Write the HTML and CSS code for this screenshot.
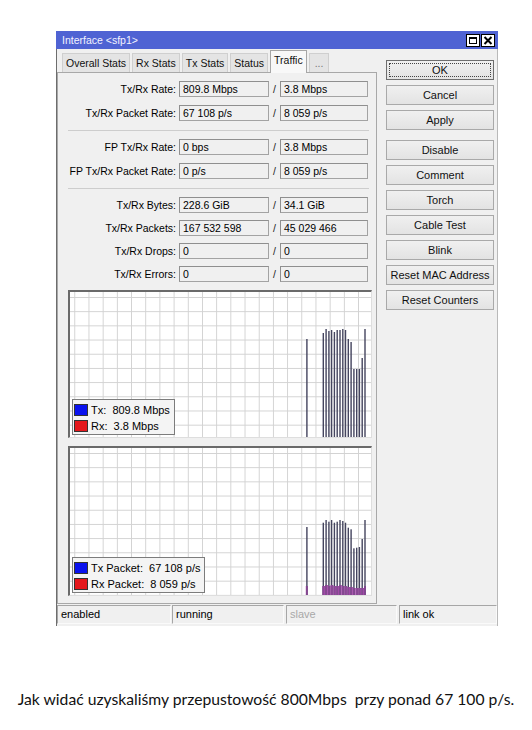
FILE: index.html
```html
<!DOCTYPE html>
<html lang="pl">
<head>
<meta charset="utf-8">
<title>Interface &lt;sfp1&gt;</title>
<link rel="stylesheet" href="styles.css">
</head>
<body>
<div class="win">
  <div class="titlebar">
    <span class="title">Interface &lt;sfp1&gt;</span>
    <svg class="tb-icons" width="29" height="13" viewBox="0 0 29 13">
      <rect x="0.5" y="0.5" width="13" height="12" fill="#fff" stroke="#000"/>
      <rect x="3.5" y="3.5" width="7" height="6" fill="none" stroke="#000"/>
      <line x1="3" y1="4" x2="11" y2="4" stroke="#000" stroke-width="2"/>
      <rect x="15.5" y="0.5" width="13" height="12" fill="#fff" stroke="#000"/>
      <path d="M18.5 3 L25.5 10 M25.5 3 L18.5 10" stroke="#000" stroke-width="2"/>
    </svg>
  </div>
  <div class="winbody">
    <div class="main">
      <div class="leftpane">
        <div class="tabs">
          <div class="tab">Overall Stats</div>
          <div class="tab">Rx Stats</div>
          <div class="tab">Tx Stats</div>
          <div class="tab">Status</div>
          <div class="tab active">Traffic</div>
          <div class="tab more">...</div>
        </div>
        <div class="panel">
          <div class="group">
            <div class="row"><span class="lbl">Tx/Rx Rate:</span><span class="fld">809.8 Mbps</span><span class="sl">/</span><span class="fld">3.8 Mbps</span></div>
            <div class="row"><span class="lbl">Tx/Rx Packet Rate:</span><span class="fld">67 108 p/s</span><span class="sl">/</span><span class="fld">8 059 p/s</span></div>
          </div>
          <div class="sep"></div>
          <div class="group">
            <div class="row"><span class="lbl">FP Tx/Rx Rate:</span><span class="fld">0 bps</span><span class="sl">/</span><span class="fld">3.8 Mbps</span></div>
            <div class="row"><span class="lbl">FP Tx/Rx Packet Rate:</span><span class="fld">0 p/s</span><span class="sl">/</span><span class="fld">8 059 p/s</span></div>
          </div>
          <div class="sep"></div>
          <div class="group tight">
            <div class="row"><span class="lbl">Tx/Rx Bytes:</span><span class="fld">228.6 GiB</span><span class="sl">/</span><span class="fld">34.1 GiB</span></div>
            <div class="row"><span class="lbl">Tx/Rx Packets:</span><span class="fld">167 532 598</span><span class="sl">/</span><span class="fld">45 029 466</span></div>
            <div class="row"><span class="lbl">Tx/Rx Drops:</span><span class="fld">0</span><span class="sl">/</span><span class="fld">0</span></div>
            <div class="row"><span class="lbl">Tx/Rx Errors:</span><span class="fld">0</span><span class="sl">/</span><span class="fld">0</span></div>
          </div>

          <div class="chart chart1">
            <svg class="bars" width="302" height="145" viewBox="0 0 302 145">
              <g fill="#45455f">
                <rect x="236.2" y="47" width="1.4" height="98"/>
                <rect x="252.6" y="41" width="1.4" height="104"/>
                <rect x="255.4" y="37" width="1.4" height="108"/>
                <rect x="258.2" y="39" width="1.4" height="106"/>
                <rect x="260.9" y="38" width="1.4" height="107"/>
                <rect x="263.7" y="40" width="1.4" height="105"/>
                <rect x="266.5" y="38" width="1.4" height="107"/>
                <rect x="269.3" y="38" width="1.4" height="107"/>
                <rect x="272.1" y="37" width="1.4" height="108"/>
                <rect x="274.8" y="38" width="1.4" height="107"/>
                <rect x="277.6" y="47" width="1.4" height="98"/>
                <rect x="280.4" y="50" width="1.4" height="95"/>
                <rect x="283.2" y="77" width="1.4" height="68"/>
                <rect x="286.0" y="77" width="1.4" height="68"/>
                <rect x="288.7" y="77" width="1.4" height="68"/>
                <rect x="291.5" y="66" width="1.4" height="79"/>
                <rect x="294.3" y="37" width="1.4" height="108"/>
              </g>
            </svg>
            <div class="legend">
              <div class="lg-row"><span class="sw blue"></span><span class="lg-txt">Tx:  809.8 Mbps</span></div>
              <div class="lg-row"><span class="sw red"></span><span class="lg-txt">Rx:  3.8 Mbps</span></div>
            </div>
          </div>

          <div class="chart chart2">
            <svg class="bars" width="302" height="147" viewBox="0 0 302 147">
              <g fill="#a24aa8">
                <rect x="235.8" y="138" width="2" height="9"/>
                <rect x="252.3" y="138" width="2.8" height="9"/>
                <rect x="255.1" y="137" width="2.8" height="10"/>
                <rect x="257.9" y="138" width="2.8" height="9"/>
                <rect x="260.6" y="137" width="2.8" height="10"/>
                <rect x="263.4" y="138" width="2.8" height="9"/>
                <rect x="266.2" y="138" width="2.8" height="9"/>
                <rect x="269.0" y="137" width="2.8" height="10"/>
                <rect x="271.8" y="138" width="2.8" height="9"/>
                <rect x="274.5" y="138" width="2.8" height="9"/>
                <rect x="277.3" y="139" width="2.8" height="8"/>
                <rect x="280.1" y="139" width="2.8" height="8"/>
                <rect x="282.9" y="140" width="2.8" height="7"/>
                <rect x="285.7" y="140" width="2.8" height="7"/>
                <rect x="288.4" y="140" width="2.8" height="7"/>
                <rect x="291.2" y="140" width="2.8" height="7"/>
                <rect x="294.0" y="138" width="2" height="9"/>
              </g>
              <g fill="#45455f">
                <rect x="236.2" y="79" width="1.4" height="68"/>
                <rect x="252.6" y="74.7" width="1.4" height="72.3"/>
                <rect x="255.4" y="72" width="1.4" height="75"/>
                <rect x="258.2" y="73.7" width="1.4" height="73.3"/>
                <rect x="260.9" y="72" width="1.4" height="75"/>
                <rect x="263.7" y="74.7" width="1.4" height="72.3"/>
                <rect x="266.5" y="73.7" width="1.4" height="73.3"/>
                <rect x="269.3" y="72" width="1.4" height="75"/>
                <rect x="272.1" y="73" width="1.4" height="74"/>
                <rect x="274.8" y="74.7" width="1.4" height="72.3"/>
                <rect x="277.6" y="79.7" width="1.4" height="67.3"/>
                <rect x="280.4" y="81.3" width="1.4" height="65.7"/>
                <rect x="283.2" y="100.3" width="1.4" height="46.7"/>
                <rect x="286.0" y="99.7" width="1.4" height="47.3"/>
                <rect x="288.7" y="99" width="1.4" height="48"/>
                <rect x="291.5" y="91" width="1.4" height="56"/>
                <rect x="294.3" y="72" width="1.4" height="75"/>
              </g>
              <g fill="#a24aa8" opacity="0.75">
                <rect x="236.2" y="138" width="1.4" height="9"/>
                <rect x="252.6" y="138" width="1.4" height="9"/>
                <rect x="255.4" y="137" width="1.4" height="10"/>
                <rect x="258.2" y="138" width="1.4" height="9"/>
                <rect x="260.9" y="137" width="1.4" height="10"/>
                <rect x="263.7" y="138" width="1.4" height="9"/>
                <rect x="266.5" y="138" width="1.4" height="9"/>
                <rect x="269.3" y="137" width="1.4" height="10"/>
                <rect x="272.1" y="138" width="1.4" height="9"/>
                <rect x="274.8" y="138" width="1.4" height="9"/>
                <rect x="277.6" y="139" width="1.4" height="8"/>
                <rect x="280.4" y="139" width="1.4" height="8"/>
                <rect x="283.2" y="140" width="1.4" height="7"/>
                <rect x="286.0" y="140" width="1.4" height="7"/>
                <rect x="288.7" y="140" width="1.4" height="7"/>
                <rect x="291.5" y="140" width="1.4" height="7"/>
                <rect x="294.3" y="138" width="1.4" height="9"/>
              </g>
            </svg>
            <div class="legend">
              <div class="lg-row"><span class="sw blue"></span><span class="lg-txt">Tx Packet:  67 108 p/s</span></div>
              <div class="lg-row"><span class="sw red"></span><span class="lg-txt">Rx Packet:  8 059 p/s</span></div>
            </div>
          </div>
        </div>
      </div>
      <div class="rightpane">
        <div class="btn default"><span class="focus">OK</span></div>
        <div class="btn">Cancel</div>
        <div class="btn">Apply</div>
        <div class="btn gap-top">Disable</div>
        <div class="btn">Comment</div>
        <div class="btn">Torch</div>
        <div class="btn">Cable Test</div>
        <div class="btn">Blink</div>
        <div class="btn">Reset MAC Address</div>
        <div class="btn">Reset Counters</div>
      </div>
    </div>
    <div class="status">
      <div class="cell c1">enabled</div>
      <div class="cell c2">running</div>
      <div class="cell c3 dim">slave</div>
      <div class="cell c4">link ok</div>
    </div>
  </div>
</div>
<p class="caption">Jak widać uzyskaliśmy przepustowość 800Mbps&nbsp; przy ponad 67 100 p/s.</p>
</body>
</html>
```

FILE: styles.css
```css
html, body {
  margin: 0;
  padding: 0;
  background: #fff;
}
body {
  width: 532px;
  height: 730px;
  overflow: hidden;
  font-family: "Liberation Sans", Arial, sans-serif;
  font-size: 10.5px;
  color: #000;
}
.win {
  margin: 31px 0 0 56px;
  width: 442px;
}
.titlebar {
  height: 18px;
  background: #4f63d3;
  color: #f2f2ff;
  display: flex;
  align-items: center;
  justify-content: space-between;
  padding: 0 3px 0 6px;
}
.title {
  font-size: 10.5px;
}
.tb-icons {
  display: block;
}
.winbody {
  background: #f0f0f0;
  border-left: 1px solid #6d6d6d;
  border-right: 1px solid #b9b9b9;
  height: 577px;
  display: flex;
  flex-direction: column;
}
.main {
  display: flex;
  height: 554px;
}
.leftpane {
  width: 320px;
  display: flex;
  flex-direction: column;
}
.tabs {
  display: flex;
  height: 22px;
  margin-top: 1px;
  padding-left: 5px;
  align-items: flex-end;
}
.tab {
  height: 19px;
  box-sizing: border-box;
  background: #e4e4e4;
  border: 1px solid #cfcfcf;
  border-bottom: none;
  padding: 3px 3px 0;
  margin-right: 2px;
  color: #111;
  white-space: nowrap;
}
.tab.active {
  background: #f8f8f8;
  border-color: #a6a6a6;
  padding-top: 3px;
  position: relative;
  z-index: 1;
  margin-bottom: -1px;
  height: 23px;
}
.tab.more {
  color: #777;
  padding: 3px 5px 0;
}
.panel {
  flex: 1;
  border: 1px solid #a8a8a8;
  background: #f0f0f0;
  padding: 8px 9px 7px 10px;
  display: flex;
  flex-direction: column;
}
.group {
  display: flex;
  flex-direction: column;
  gap: 8px;
}
.group.tight {
  gap: 7px;
}
.row {
  display: grid;
  grid-template-columns: 111px 90px 11px 88px;
  height: 16px;
  align-items: center;
}
.lbl {
  text-align: right;
  padding-right: 3px;
  white-space: nowrap;
}
.fld {
  height: 16px;
  box-sizing: border-box;
  border: 1px solid #a3a3a3;
  border-top-color: #8f8f8f;
  border-left-color: #8f8f8f;
  background: #f0f0f0;
  padding: 1px 0 0 3px;
  line-height: 13px;
  white-space: nowrap;
}
.sl {
  text-align: center;
  color: #222;
}
.sep {
  height: 1px;
  background: #cdcdcd;
  margin: 9px 0 8px;
  width: 301px;
}
.chart {
  position: relative;
  width: 304px;
  box-sizing: border-box;
  border-top: 2px solid #6a6a6a;
  border-left: 2px solid #6a6a6a;
  border-right: 1px solid #dedede;
  border-bottom: 1px solid #dedede;
  background-color: #fff;
  background-image:
    linear-gradient(to right, #d2d2d2 1px, transparent 1px),
    linear-gradient(to bottom, #d2d2d2 1px, transparent 1px);
  background-size: 14.2px 14.2px;
  background-position: 4.3px 5px;
}
.chart1 {
  height: 148px;
  margin-top: 8px;
}
.chart2 {
  height: 150px;
  margin-top: 8px;
}
.bars {
  display: block;
}
.legend {
  position: absolute;
  left: 2px;
  bottom: 2px;
  background: #f4f4f4;
  border: 1px solid #7c7c7c;
  padding: 3px 4px 2px 1px;
  display: flex;
  flex-direction: column;
  gap: 3px;
  font-size: 11px;
}
.lg-row {
  display: flex;
  align-items: center;
  height: 13px;
}
.sw {
  width: 12px;
  height: 10px;
  border: 1px solid #333;
  margin-right: 3px;
}
.sw.blue {
  background: #0a12ee;
}
.sw.red {
  background: #e4181c;
}
.lg-txt {
  white-space: pre;
}
.rightpane {
  width: 121px;
  padding: 11px 0 0 9px;
  box-sizing: border-box;
  display: flex;
  flex-direction: column;
  gap: 5px;
}
.btn {
  width: 108px;
  height: 20px;
  box-sizing: border-box;
  border: 1px solid #a9a9a9;
  background: linear-gradient(#f0f0f0, #e3e3e3);
  display: flex;
  align-items: center;
  justify-content: center;
  color: #111;
  white-space: nowrap;
  font-size: 11px;
}
.btn.default {
  border-color: #6e6e6e;
  padding: 2px;
}
.btn .focus {
  flex: 1;
  align-self: stretch;
  border: 1px dotted #444;
  display: flex;
  align-items: center;
  justify-content: center;
}
.btn.gap-top {
  margin-top: 5px;
}
.status {
  display: flex;
  margin-top: 2px;
  height: 19px;
}
.cell {
  box-sizing: border-box;
  height: 19px;
  border-top: 1px solid #a6a6a6;
  border-left: 1px solid #a6a6a6;
  border-right: 1px solid #fafafa;
  border-bottom: 1px solid #fafafa;
  padding: 2px 0 0 3px;
  background: #f0f0f0;
  white-space: nowrap;
  font-size: 11px;
}
.c1 { width: 114px; margin-right: 1px; }
.c2 { width: 112px; margin-right: 2px; }
.c3 { width: 111px; margin-right: 2px; }
.c4 { width: 98px; }
.dim { color: #a8a8a8; }
.caption {
  margin: 64px 0 0;
  text-align: center;
  font-family: Lato, "Open Sans", sans-serif;
  font-size: 15.7px;
  color: #111;
}
```
